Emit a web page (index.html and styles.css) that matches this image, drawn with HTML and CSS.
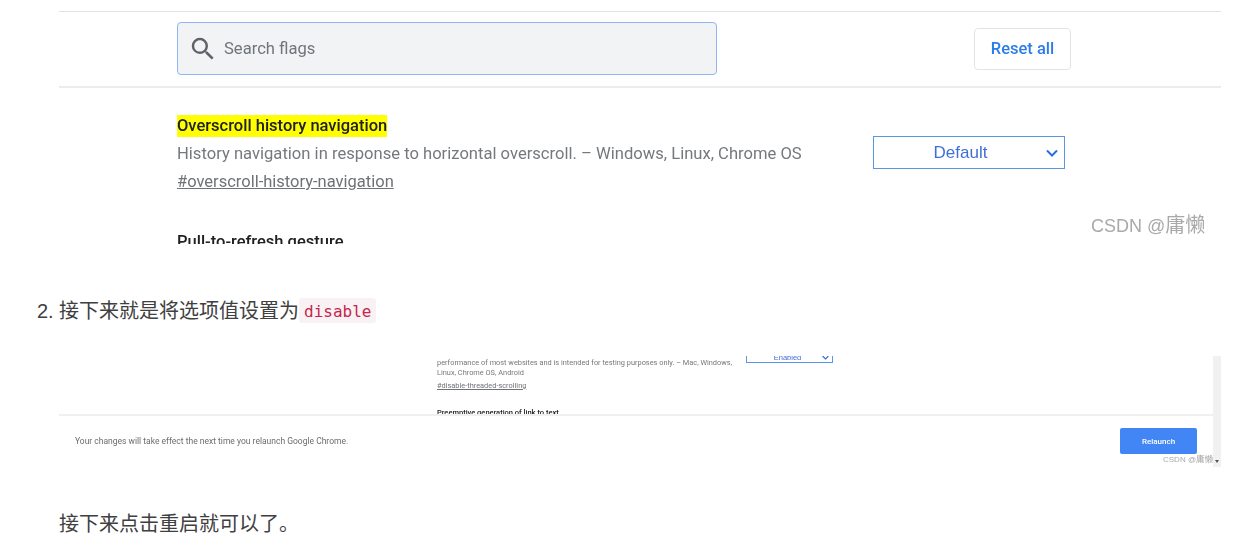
FILE: index.html
```html
<!DOCTYPE html>
<html lang="zh">
<head>
<meta charset="utf-8">
<title>Overscroll</title>
<link rel="stylesheet" href="styles.css">
</head>
<body>
<article class="article">
  <figure class="shot shot-one">
    <div class="toolbar">
      <div class="search">
        <svg class="search-icon" viewBox="0 0 24 24" width="30" height="30"><path fill="#5f6368" d="M15.5 14h-.79l-.28-.27A6.47 6.47 0 0 0 16 9.5 6.5 6.5 0 1 0 9.5 16c1.61 0 3.09-.59 4.23-1.57l.27.28v.79l5 4.99L20.49 19l-4.99-5zm-6 0C7.01 14 5 11.99 5 9.5S7.01 5 9.5 5 14 7.01 14 9.5 11.99 14 9.5 14z"/></svg>
        <span class="search-text">Search flags</span>
      </div>
      <button class="reset">Reset all</button>
    </div>
    <section class="flag">
      <div class="flag-info">
        <h3 class="flag-title"><mark class="hl">Overscroll history navigation</mark></h3>
        <p class="flag-desc">History navigation in response to horizontal overscroll. – Windows, Linux, Chrome OS</p>
        <a class="flag-link">#overscroll-history-navigation</a>
      </div>
      <div class="select">
        <span>Default</span>
        <svg class="chev" viewBox="0 0 12 8" width="12" height="8"><path d="M1 1.5l5 5 5-5" fill="none" stroke="#2a6fdb" stroke-width="2"/></svg>
      </div>
    </section>
    <h3 class="flag-title next">Pull-to-refresh gesture</h3>
    <span class="mark mark-one"><span class="mark-latin">CSDN @</span>庸懒</span>
  </figure>

  <ol class="steps" start="2">
    <li>接下来就是将选项值设置为<code class="code">disable</code></li>
  </ol>

  <figure class="shot shot-two">
    <div class="two-main">
      <div class="two-scroll">
        <div class="two-flag">
          <div class="two-info">
            <p class="two-desc">performance of most websites and is intended for testing purposes only. – Mac, Windows, Linux, Chrome OS, Android</p>
            <a class="two-link">#disable-threaded-scrolling</a>
          </div>
          <div class="two-select"><span class="two-value">Enabled</span><svg viewBox="0 0 12 8" width="7" height="5"><path d="M1 1.5l5 5 5-5" fill="none" stroke="#2a6fdb" stroke-width="2"/></svg></div>
        </div>
        <h4 class="two-title">Preemptive generation of link to text</h4>
      </div>
      <div class="two-footer">
        <span class="two-note">Your changes will take effect the next time you relaunch Google Chrome.</span>
        <button class="relaunch">Relaunch</button>
      </div>
    </div>
    <div class="scrollbar"><span class="arrow"></span></div>
    <span class="mark mark-two"><span class="mark-latin">CSDN @</span>庸懒</span>
  </figure>

  <p class="para">接下来点击重启就可以了。</p>
</article>
</body>
</html>
```
FILE: styles.css
```css
* { box-sizing: border-box; }
html, body { margin: 0; background: #fff; }
body { height: 558px; overflow: hidden; font-family: "Liberation Sans", "Noto Sans CJK SC", sans-serif; color: #4d4d4d; }
.article { padding: 0 30px 0 59px; }
.shot { margin: 0; position: relative; overflow: hidden; }

.shot-one { height: 244px; padding-top: 11px; font-family: Roboto, sans-serif; filter: blur(0.3px); }
.toolbar { height: 77px; border-top: 1px solid #e3e3e6; border-bottom: 2px solid #ececee; padding: 10px 150px 0 118px; display: flex; justify-content: space-between; align-items: flex-start; }
.search { width: 540px; height: 53px; background: #f1f3f4; border: 1.5px solid #8fb5f5; border-radius: 4px; display: flex; align-items: center; padding-left: 10px; gap: 6px; }
.search-text { font-size: 16.6px; color: #70757a; }
.reset { margin-top: 6px; width: 97px; height: 42px; padding-bottom: 3px; background: #fff; border: 1px solid #e1e3e8; border-radius: 4px; color: #2b7de9; font: 500 16.5px Roboto, sans-serif; }
.flag { display: flex; padding: 27px 156px 0 118px; justify-content: space-between; }
.flag-title { margin: 0; font: 500 16.5px/22px Roboto, sans-serif; color: #202124; }
.hl { background: #ff0; color: #202124; display: inline-block; }
.flag-desc { margin: 6px 0 0; font-size: 16.6px; line-height: 22px; color: #75787d; }
.flag-link { display: inline-block; margin-top: 6px; font-size: 16.5px; line-height: 22px; color: #6f7276; text-decoration: underline; }
.select { margin-top: 21px; width: 192px; height: 33px; border: 1.5px solid #5a95ea; display: flex; align-items: center; justify-content: center; padding-right: 17px; position: relative; font: 17px "Liberation Sans", sans-serif; color: #3f6fd8; }
.chev { position: absolute; right: 6px; top: 12px; }
.next { margin: 38px 0 0 118px; }
.mark { position: absolute; font-family: "Liberation Sans", "Noto Sans CJK SC", sans-serif; color: #a9a9a9; white-space: nowrap; }
.mark-one { left: 1032px; top: 213px; font-size: 20px; line-height: 24px; }
.mark-one .mark-latin { font-size: 18px; }

.steps { margin: 53px 0 0; padding: 0; list-style: none; font-size: 20px; line-height: 28px; color: #404040; }
.steps li { position: relative; }
.steps li::before { content: "2."; position: absolute; left: -22px; }
.code { font: 16px "DejaVu Sans Mono", monospace; color: #c7254e; background: #f9f2f4; padding: 4px 5px 2px; border-radius: 3px; vertical-align: 1px; }

.shot-two { margin-top: 31px; height: 111px; display: flex; filter: blur(0.4px); font-family: Roboto, sans-serif; }
.two-main { flex: 1; display: flex; flex-direction: column; min-width: 0; }
.two-scroll { height: 58px; overflow: hidden; display: flex; flex-direction: column; justify-content: flex-end; padding-left: 378px; }
.two-flag { display: flex; gap: 9px; align-items: flex-start; }
.two-info { width: 300px; }
.two-desc { margin: 0; font-size: 7.38px; line-height: 10px; color: #75787d; }
.two-link { display: block; margin-top: 3px; font-size: 7.4px; line-height: 10px; color: #6f7276; text-decoration: underline; }
.two-select { margin-top: -5px; width: 87px; height: 10px; border: solid #5a95ea; border-width: 0 1px 1px; display: flex; justify-content: center; align-items: center; position: relative; padding-right: 4px; }
.two-select svg { position: absolute; right: 3px; top: 2px; }
.two-value { font: 7.5px "Liberation Sans", sans-serif; color: #3f6fd8; }
.two-title { margin: 17px 0 -4px; font: 500 7.5px/10px Roboto, sans-serif; color: #202124; }
.two-footer { flex: 1; border-top: 2px solid #f0f0f0; display: flex; justify-content: space-between; align-items: flex-start; padding: 12px 16px 0; }
.two-note { margin-top: 8px; font-size: 8.5px; line-height: 10px; color: #6a6d70; }
.relaunch { width: 77px; height: 26px; background: #4285f4; border: 0; border-radius: 2px; color: #fff; font: 500 8px Roboto, sans-serif; }
.scrollbar { width: 8px; background: #f1f1f1; position: relative; }
.arrow { position: absolute; left: 2px; bottom: 4px; border: 2px solid transparent; border-top: 3px solid #555; border-bottom: 0; }
.mark-two { left: 1104px; top: 98px; font-size: 8.5px; line-height: 10px; }
.mark-two .mark-latin { font-size: 8px; }

.para { margin: 43px 0 0; font-size: 20px; line-height: 28px; color: #404040; }
```
